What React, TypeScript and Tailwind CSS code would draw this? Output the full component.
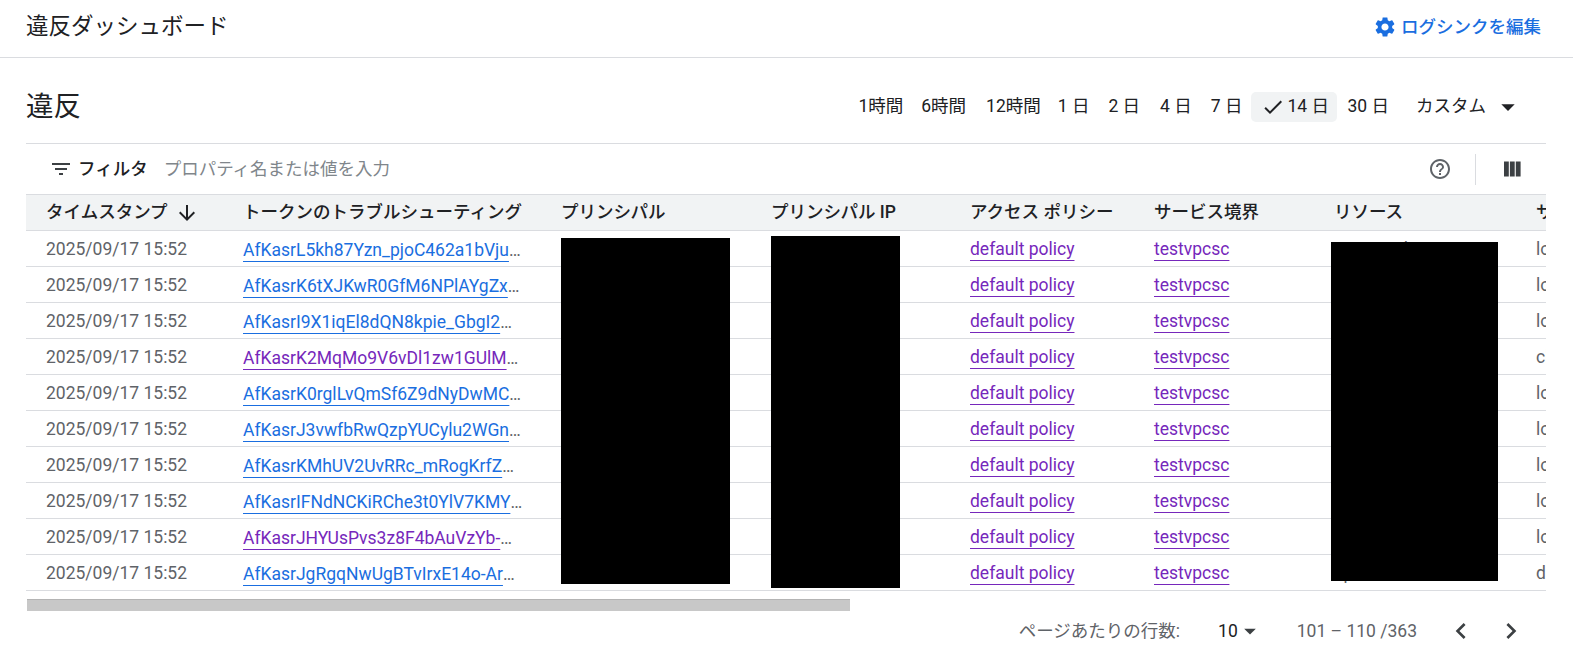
import React from "react";

const ROW = "grid grid-cols-[217px_318px_210px_199px_184px_180px_202px_200px] items-center";

const I = ({ d, className }: { d: string; className: string }) => (
  <svg viewBox="0 0 24 24" fill="currentColor" className={className}>
    <path d={d} />
  </svg>
);

const GEAR = "M19.14 12.94c.04-.3.06-.61.06-.94 0-.32-.02-.64-.07-.94l2.03-1.58c.18-.14.23-.41.12-.61l-1.92-3.32c-.12-.22-.37-.29-.59-.22l-2.39.96c-.5-.38-1.03-.7-1.62-.94l-.36-2.54c-.04-.24-.24-.41-.48-.41h-3.84c-.24 0-.43.17-.47.41l-.36 2.54c-.59.24-1.13.57-1.62.94l-2.39-.96c-.22-.08-.47 0-.59.22L2.74 8.87c-.12.21-.08.47.12.61l2.03 1.58c-.05.3-.09.63-.09.94s.02.64.07.94l-2.03 1.58c-.18.14-.23.41-.12.61l1.92 3.32c.12.22.37.29.59.22l2.39-.96c.5.38 1.03.7 1.62.94l.36 2.54c.05.24.24.41.48.41h3.84c.24 0 .44-.17.47-.41l.36-2.54c.59-.24 1.13-.56 1.62-.94l2.39.96c.22.08.47 0 .59-.22l1.92-3.32c.12-.22.07-.47-.12-.61l-2.01-1.58zM12 15.6c-1.98 0-3.6-1.62-3.6-3.6s1.62-3.6 3.6-3.6 3.6 1.62 3.6 3.6-1.62 3.6-3.6 3.6z";
const CHECK = "M9 16.17L4.83 12l-1.42 1.41L9 19 21 7l-1.41-1.41z";
const FILTER = "M10 18h4v-2h-4v2zM3 6v2h18V6H3zm3 7h12v-2H6v2z";
const HELP = "M11 18h2v-2h-2v2zm1-16C6.48 2 2 6.48 2 12s4.48 10 10 10 10-4.48 10-10S17.52 2 12 2zm0 18c-4.41 0-8-3.59-8-8s3.59-8 8-8 8 3.59 8 8-3.59 8-8 8zm0-14c-2.21 0-4 1.79-4 4h2c0-1.1.9-2 2-2s2 .9 2 2c0 2-3 1.75-3 5h2c0-2.25 3-2.5 3-5 0-2.21-1.79-4-4-4z";
const COLS = "M4 4.5h4.8v15H4zM9.9 4.5h4.8v15H9.9zM15.8 4.5h4.8v15h-4.8z";
const DOWN = "M20 12l-1.41-1.41L13 16.17V4h-2v12.17l-5.58-5.59L4 12l8 8 8-8z";
const LEFT = "M15.41 7.41L14 6l-6 6 6 6 1.41-1.41L10.83 12z";
const RIGHT = "M10 6L8.59 7.41 13.17 12l-4.58 4.59L10 18l6-6z";
const DROP = "M7 10l5 5 5-5z";

const rows = [
  { t: "AfKasrL5kh87Yzn_pjoC462a1bVjuQwZ8mNcT", v: false, r: "oooooool", s: "logging.googleapis.com" },
  { t: "AfKasrK6tXJKwR0GfM6NPlAYgZxQwZ8mNcTab", v: false, r: "projects/123", s: "logging.googleapis.com" },
  { t: "AfKasrI9X1iqEl8dQN8kpie_GbgI2MWMwZ8mNcT", v: false, r: "projects/123", s: "logging.googleapis.com" },
  { t: "AfKasrK2MqMo9V6vDl1zw1GUlMQwZ8mNcTabc", v: true, r: "projects/123", s: "cloudresourcemanager" },
  { t: "AfKasrK0rglLvQmSf6Z9dNyDwMCQwZ8mNcTab", v: false, r: "projects/123", s: "logging.googleapis.com" },
  { t: "AfKasrJ3vwfbRwQzpYUCylu2WGnQwZ8mNcTab", v: false, r: "projects/123", s: "logging.googleapis.com" },
  { t: "AfKasrKMhUV2UvRRc_mRogKrfZMWMwZ8mNcTabc", v: false, r: "projects/123", s: "logging.googleapis.com" },
  { t: "AfKasrIFNdNCKiRChe3t0YlV7KMYQwZ8mNcTa", v: false, r: "projects/123", s: "logging.googleapis.com" },
  { t: "AfKasrJHYUsPvs3z8F4bAuVzYb-MWMwZ8mNcTab", v: true, r: "projects/123", s: "logging.googleapis.com" },
  { t: "AfKasrJgRgqNwUgBTvIrxE14o-ArMWMwZ8mNcTa", v: false, r: "ap", s: "dns.googleapis.com" },
];

const LINK = "underline underline-offset-[5px] decoration-1 [text-decoration-skip-ink:none]";

const ranges = [
  { l: "1時間", c: "" },
  { l: "6時間", c: "ml-[18px]" },
  { l: "12時間", c: "ml-[20px]" },
  { l: "1 日", c: "ml-[17px]" },
  { l: "2 日", c: "ml-[19px]" },
  { l: "4 日", c: "ml-[20px]" },
  { l: "7 日", c: "ml-[19px]" },
];

export default function App() {
  return (
    <div className="w-[1573px] h-[659px] overflow-hidden bg-white text-[17.5px] text-[#202124] font-['Roboto','Noto_Sans_CJK_JP',sans-serif]">
      <header className="h-[58px] pb-[3px] border-b border-[#dadce0] flex items-center justify-between pl-[26px] pr-[32px]">
        <h1 className="text-[22.5px] font-normal">違反ダッシュボード</h1>
        <a className="flex items-center text-[#1a6ee0] font-medium">
          <I d={GEAR} className="w-[24px] h-[24px] mr-[4px]" />
          ログシンクを編集
        </a>
      </header>

      <main className="pl-[26px] pr-[27px]">
        <div className="h-[85px] pt-[12px] flex items-center justify-between pr-[22px]">
          <h2 className="text-[27.5px] font-normal">違反</h2>
          <div className="flex items-center font-normal whitespace-nowrap">
            {ranges.map((x) => (
              <span key={x.l} className={x.c}>{x.l}</span>
            ))}
            <span className="ml-[9px] h-[30px] w-[86px] rounded-[5px] bg-[#f1f3f4] flex items-center pl-[10px]">
              <I d={CHECK} className="w-[24px] h-[24px] mr-[2px]" />
              14 日
            </span>
            <span className="ml-[10px]">30 日</span>
            <span className="ml-[27px]">カスタム</span>
            <I d={DROP} className="w-[32px] h-[32px] ml-[6px]" />
          </div>
        </div>

        <div className="h-[51px] border-t border-[#dadce0] flex items-center pl-[23px] pr-[22px]">
          <I d={FILTER} className="w-[24px] h-[24px] text-[#3c4043]" />
          <span className="ml-[5px] font-medium">フィルタ</span>
          <span className="ml-[16px] text-[#80868b]">プロパティ名または値を入力</span>
          <I d={HELP} className="ml-auto w-[24px] h-[24px] text-[#5f6368]" />
          <span className="ml-[23px] w-px h-[31px] bg-[#dadce0]" />
          <I d={COLS} className="ml-[24px] w-[24px] h-[24px] text-[#3c4043]" />
        </div>

        <div className="relative overflow-hidden">
          <div className={`${ROW} h-[37px] bg-[#f1f3f4] border-y border-[#dadce0] font-medium whitespace-nowrap`}>
            <div className="pl-[20px] flex items-center">
              タイムスタンプ
              <I d={DOWN} className="w-[24px] h-[24px] ml-[7px]" />
            </div>
            <div>トークンのトラブルシューティング</div>
            <div>プリンシパル</div>
            <div>プリンシパル IP</div>
            <div>アクセス ポリシー</div>
            <div>サービス境界</div>
            <div>リソース</div>
            <div>サービス名</div>
          </div>
          {rows.map((r, i) => (
            <div key={i} className={`${ROW} h-[36px] pt-[2px] border-b border-[#dadce0] text-[#5f6368] whitespace-nowrap`}>
              <div className="pl-[20px]">2025/09/17 15:52</div>
              <div className="w-[281px] truncate leading-[30px]">
                <a className={`${LINK} ${r.v ? "text-[#7627bb]" : "text-[#1a6ee0]"}`}>{r.t}</a>
              </div>
              <div>principal</div>
              <div>192.0.2.1</div>
              <div><a className={`${LINK} text-[#7627bb]`}>default policy</a></div>
              <div><a className={`${LINK} text-[#7627bb]`}>testvpcsc</a></div>
              <div>{r.r}</div>
              <div>{r.s}</div>
            </div>
          ))}
          <div className="absolute left-[535px] top-[44px] w-[169px] h-[346px] bg-black" />
          <div className="absolute left-[745px] top-[42px] w-[129px] h-[352px] bg-black" />
          <div className="absolute left-[1305px] top-[48px] w-[167px] h-[339px] bg-black" />
        </div>

        <div className="mt-[8px] h-[12px] w-[823px] ml-px bg-[#c8c8c8] border-t border-[#b4b4b4]" />

        <div className="h-[40px] flex items-center justify-end text-[#5f6368] pr-[19px] whitespace-nowrap">
          <span>ページあたりの行数:</span>
          <span className="ml-[38px] text-[#202124]">10</span>
          <I d={DROP} className="w-[28px] h-[28px] ml-[-2px] text-[#3c4043]" />
          <span className="ml-[33px]">101 – 110 /363</span>
          <I d={LEFT} className="ml-[28px] w-[32px] h-[32px] text-[#3c4043]" />
          <I d={RIGHT} className="ml-[18px] w-[32px] h-[32px] text-[#3c4043]" />
        </div>
      </main>
    </div>
  );
}
